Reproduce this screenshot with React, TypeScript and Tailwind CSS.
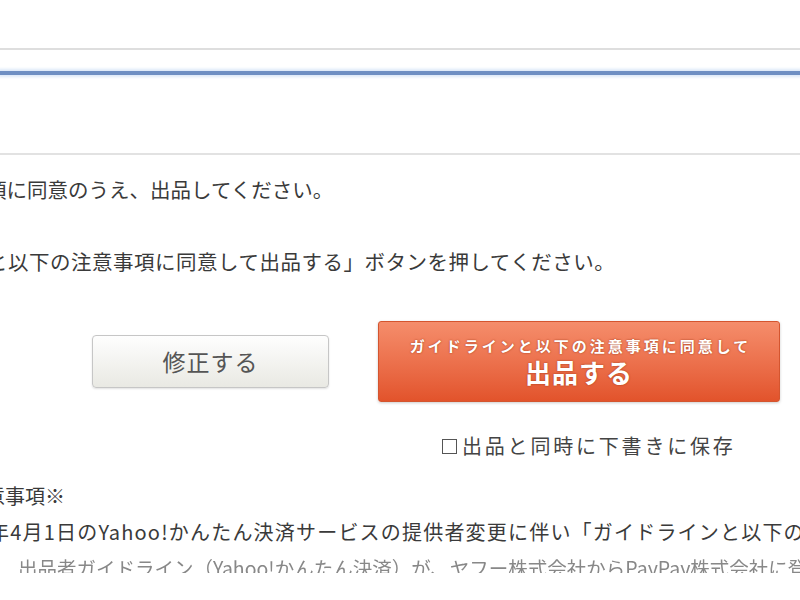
const jp = "font-['Noto_Sans_CJK_JP','Noto_Sans_CJK_SC',sans-serif]";

export default function App() {
  return (
    <div className={`w-[800px] h-[600px] overflow-hidden bg-white text-[#3a3a3a] ${jp}`}>
      <div className="pt-[48px]">
        <div className="h-[2px] bg-[#dedede]" />
        <div className="mt-[21px] h-[4px] bg-[#6e8fc3] shadow-[0_0_3px_2px_#dbe8f8]" />
        <div className="mt-[78px] h-[2px] bg-[#e2e2e2]" />

        <p className="mt-[20px] h-[28px] leading-[28px] text-[20.5px] whitespace-nowrap -ml-[14px]">
          項に同意のうえ、出品してください。
        </p>
        <p className="mt-[44px] h-[28px] leading-[28px] text-[20.5px] tracking-[0.5px] whitespace-nowrap -ml-[13px]">
          と以下の注意事項に同意して出品する」ボタンを押してください。
        </p>

        <div className="mt-[46px] flex items-center pl-[92px] gap-[49px]">
          <button className="w-[237px] h-[53px] rounded-[4px] border border-[#c6c6c6] bg-linear-to-b from-[#fefefe] to-[#e9e9e3] shadow-[0_1px_2px_rgba(0,0,0,0.12)] text-[23px] text-[#555] tracking-[1px]">
            修正する
          </button>
          <button className="w-[402px] h-[81px] rounded-[3px] border border-[#d4552f] bg-linear-to-b from-[#f58d6b] to-[#e2532b] shadow-[0_1px_3px_rgba(0,0,0,0.2)] flex flex-col items-center justify-center text-white font-bold [text-shadow:0_0_2px_#9c3514]">
            <span className="text-[15px] leading-[20px] tracking-[3px] pl-[3px]">
              ガイドラインと以下の注意事項に同意して
            </span>
            <span className="text-[26px] leading-[32px] tracking-[1px]">出品する</span>
          </button>
        </div>

        <label className="mt-[30px] ml-[442px] flex items-center h-[28px] text-[20px] tracking-[2.8px] whitespace-nowrap text-[#444]">
          <span className="inline-block w-[15px] h-[15px] border border-[#555] mr-[5px] bg-white" />
          出品と同時に下書きに保存
        </label>

        <p className="mt-[18px] h-[36px] leading-[36px] text-[20px] whitespace-nowrap -ml-[15px]">
          意事項※
        </p>
        <p className="h-[36px] leading-[36px] text-[20px] tracking-[1.2px] whitespace-nowrap -ml-[11px]">
          年4月1日のYahoo!かんたん決済サービスの提供者変更に伴い「ガイドラインと以下の注意事項
        </p>
        <div className="h-[23px] overflow-hidden">
          <p className="leading-[36px] text-[19.5px] whitespace-nowrap pl-[18px] text-[#888] blur-[0.7px]">
            出品者ガイドライン（Yahoo!かんたん決済）が、ヤフー株式会社からPayPay株式会社に登録情報が
          </p>
        </div>
      </div>
    </div>
  );
}
